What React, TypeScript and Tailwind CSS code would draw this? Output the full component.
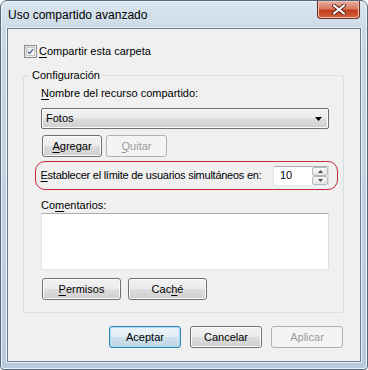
import React from "react";

const btn =
  "h-[22px] rounded-[3px] border border-[#707070] bg-[linear-gradient(180deg,#f2f2f2_0%,#ebebeb_48%,#dddddd_52%,#cfcfcf_100%)] shadow-[inset_0_0_0_1px_#fbfbfb] flex items-center justify-center text-black";
const btnDisabled =
  "h-[22px] rounded-[3px] border border-[#adb2b5] bg-[#f4f4f4] flex items-center justify-center text-[#9a9a9a]";
const btnDefault =
  "h-[22px] rounded-[3px] border border-[#3c7fb1] bg-[linear-gradient(180deg,#eaf3f9_0%,#e0ecf4_48%,#cfe0ec_52%,#bfd5e5_100%)] shadow-[inset_0_0_0_1px_#9fdcf5] flex items-center justify-center text-black";

function U({ children }: { children: React.ReactNode }) {
  return <span className="underline underline-offset-[2px]">{children}</span>;
}

function CloseButton() {
  return (
    <div className="mt-[0px] mr-[1px] w-[43px] h-[18px] rounded-b-[4px] border border-t-0 border-[#6b2a1f] bg-[linear-gradient(180deg,#e8b0a2_0%,#d9785e_45%,#c4401d_55%,#d2603c_100%)] shadow-[inset_0_0_0_1px_#f1c2b4] flex items-center justify-center">
      <svg width="14" height="11" viewBox="0 0 14 11">
        <path d="M2 1.5 L12 9.5 M12 1.5 L2 9.5" stroke="#5a2418" strokeWidth="4" strokeLinecap="round" />
        <path d="M2 1.5 L12 9.5 M12 1.5 L2 9.5" stroke="#ffffff" strokeWidth="2.2" strokeLinecap="round" />
      </svg>
    </div>
  );
}

function Checkbox() {
  return (
    <div className="w-[13px] h-[13px] border border-[#8e8f8f] bg-[linear-gradient(135deg,#dcdcdc_0%,#f6f6f6_100%)] flex items-center justify-center">
      <div className="w-[9px] h-[9px] border border-[#c5c5c5] bg-[linear-gradient(135deg,#e8e8e8_0%,#fdfdfd_100%)] flex items-center justify-center">
        <svg width="9" height="9" viewBox="0 0 9 9" className="-mt-[1px]">
          <path d="M1.2 4.6 L3.4 7.2 L7.8 1.4" fill="none" stroke="#4a5f97" strokeWidth="1.6" />
        </svg>
      </div>
    </div>
  );
}

function SpinBox() {
  return (
    <div className="w-[56px] h-[20px] border border-[#abadb3] border-l-[#e2e3ea] border-r-[#dbdfe6] border-b-[#e3e9ef] bg-white flex items-center">
      <span className="flex-1 pl-[6px] text-black">10</span>
      <div className="w-[16px] h-[18px] flex flex-col">
        <div className="flex-1 border border-[#b3b8bd] rounded-[2px] bg-[linear-gradient(180deg,#f7f7f7,#e4e4e4)] flex items-center justify-center">
          <svg width="5" height="3" viewBox="0 0 5 3"><path d="M0 3 L2.5 0 L5 3 Z" fill="#4d4d4d" /></svg>
        </div>
        <div className="flex-1 border border-[#b3b8bd] rounded-[2px] bg-[linear-gradient(180deg,#f7f7f7,#e4e4e4)] flex items-center justify-center">
          <svg width="5" height="3" viewBox="0 0 5 3"><path d="M0 0 L2.5 3 L5 0 Z" fill="#4d4d4d" /></svg>
        </div>
      </div>
    </div>
  );
}

export default function App() {
  return (
    <div className="w-[368px] h-[370px] bg-white font-['Liberation_Sans',Arial,sans-serif] text-[11px] leading-[13px] text-black">
      <div className="w-[368px] h-[370px] rounded-t-[7px] rounded-b-[4px] border border-[#56687a] bg-[linear-gradient(180deg,#d9e5ef_0%,#c9d8e5_10%,#bfd1e1_60%,#b6cbdd_100%)] shadow-[inset_0_0_0_1px_#eef4f9] flex flex-col px-[6px] pb-[7px]">
        <div className="h-[27px] flex items-start justify-between">
          <span className="mt-[7px] ml-[1px] text-[12px] leading-[15px] text-black">Uso compartido avanzado</span>
          <CloseButton />
        </div>
        <div className="flex-1 border border-[#6d7d8c] shadow-[0_0_0_1px_#e7eef5] bg-[#f0f0f0] flex flex-col">
          <div className="mt-[16px] ml-[16px] flex items-center gap-[2px]">
            <Checkbox />
            <span>
              <U>C</U>ompartir esta carpeta
            </span>
          </div>
          <fieldset className="mt-[10px] ml-[15px] mr-[16px] h-[245px] border border-[#d5dfe5] rounded-[3px] pl-[17px] pr-[14px]">
            <legend className="-ml-[12px] px-[3px] leading-[14px]">Configuración</legend>
            <div className="mt-[5px]">
              <U>N</U>ombre del recurso compartido:
            </div>
            <div className="mt-[8px] h-[21px] rounded-[2px] border border-[#707070] bg-[linear-gradient(180deg,#f2f2f2_0%,#ebebeb_48%,#dddddd_52%,#cfcfcf_100%)] shadow-[inset_0_0_0_1px_#fbfbfb] flex items-center pl-[4px] pr-[6px]">
              <span className="flex-1">Fotos</span>
              <svg width="7" height="4" viewBox="0 0 7 4"><path d="M0 0 L7 0 L3.5 4 Z" fill="#000" /></svg>
            </div>
            <div className="mt-[6px] ml-[1px] flex gap-[4px]">
              <div className={btn + " w-[60px]"}>
                <span><U>A</U>gregar</span>
              </div>
              <div className={btnDisabled + " w-[61px]"}>
                <span><U>Q</U>uitar</span>
              </div>
            </div>
            <div className="mt-[4px] -ml-[6px] -mr-[9px] h-[29px] rounded-[10px] border-[1.5px] border-[#c42a3c] flex items-center pl-[4.5px] pr-[8px]">
              <span className="flex-1 whitespace-nowrap tracking-[-0.25px]">
                <U>E</U>stablecer el límite de usuarios simultáneos en:
              </span>
              <SpinBox />
            </div>
            <div className="mt-[9px]">
              Co<U>m</U>entarios:
            </div>
            <div className="mt-[1px] h-[57px] border border-[#abadb3] border-l-[#e2e3ea] border-r-[#dbdfe6] border-b-[#e3e9ef] bg-white" />
            <div className="mt-[8px] ml-[1px] flex gap-[7px]">
              <div className={btn + " w-[79px] h-[21px]"}>
                <span><U>P</U>ermisos</span>
              </div>
              <div className={btn + " w-[79px] h-[21px]"}>
                <span>Cac<U>h</U>é</span>
              </div>
            </div>
          </fieldset>
          <div className="mt-[13px] mr-[17px] flex justify-end gap-[9px]">
            <div className={btnDefault + " w-[72px]"}>Aceptar</div>
            <div className={btn + " w-[72px]"}>Cancelar</div>
            <div className={btnDisabled + " w-[72px]"}>Aplicar</div>
          </div>
        </div>
      </div>
    </div>
  );
}
